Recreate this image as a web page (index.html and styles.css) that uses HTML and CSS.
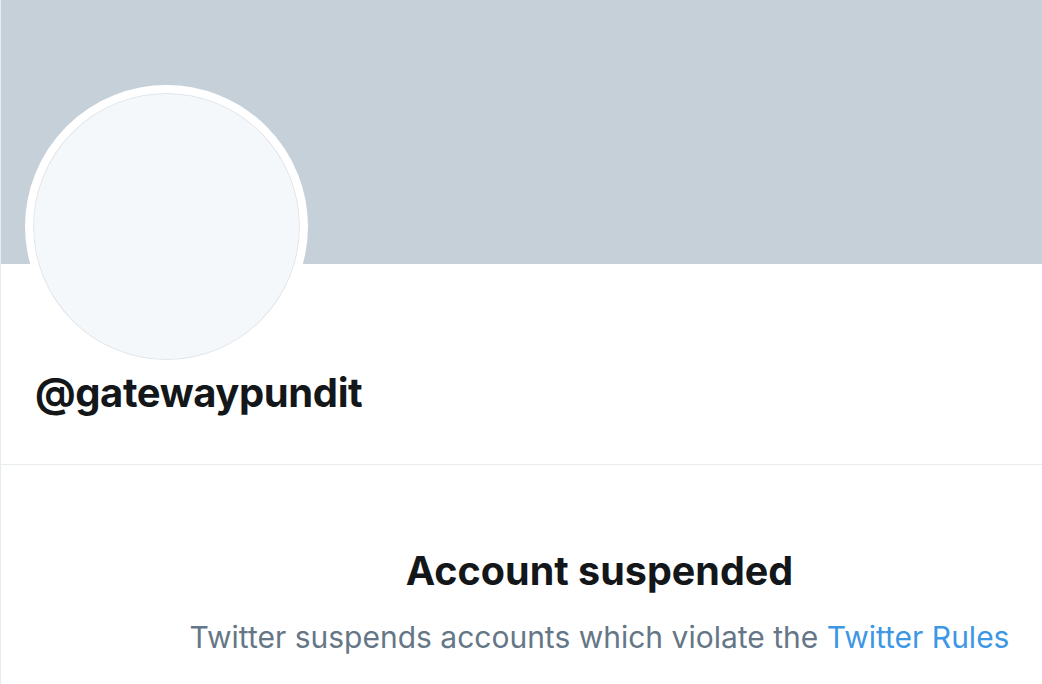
FILE: index.html
```html
<!DOCTYPE html>
<html lang="en">
<head>
<meta charset="utf-8">
<title>@gatewaypundit</title>
<link rel="stylesheet" href="styles.css">
</head>
<body>
<main class="profile">
  <div class="banner"></div>
  <section class="profile-info">
    <div class="avatar"></div>
    <h1 class="handle">@gatewaypundit</h1>
  </section>
  <section class="suspended">
    <h2 class="suspended-title">Account suspended</h2>
    <p class="suspended-text">Twitter suspends accounts which violate the <a class="rules-link" href="#">Twitter Rules</a></p>
  </section>
</main>
</body>
</html>
```
FILE: styles.css
```css
html, body {
  margin: 0;
  padding: 0;
  background: #ffffff;
}
body {
  font-family: Inter, "Noto Sans", "Liberation Sans", sans-serif;
  color: #14171a;
}
.profile {
  border-left: 1px solid #e6ecf0;
  min-height: 684px;
}
.banner {
  height: 264px;
  background: #c6d0d8;
}
.profile-info {
  display: flex;
  flex-direction: column;
  align-items: flex-start;
  padding-left: 24px;
  height: 200px;
  border-bottom: 1px solid #e6ecf0;
}
.avatar {
  width: 283px;
  height: 283px;
  flex: none;
  box-sizing: border-box;
  margin-top: -179px;
  border-radius: 50%;
  border: 8px solid #ffffff;
  background: #f5f8fa;
  box-shadow: inset 0 0 0 1px #e1e4e8;
}
.handle {
  margin: 1px 0 0 10px;
  font-size: 40px;
  line-height: 48px;
  font-weight: 700;
  color: #14171a;
  letter-spacing: -0.4px;
}
.suspended {
  display: flow-root;
  padding-left: 156px;
  text-align: center;
}
.suspended-title {
  margin: 82px 0 0;
  font-size: 39.5px;
  line-height: 48px;
  font-weight: 700;
  color: #14171a;
}
.suspended-text {
  margin: 22px 0 0;
  font-size: 30px;
  line-height: 40px;
  color: #657786;
}
.rules-link {
  color: #3d97e4;
  text-decoration: none;
}
```
